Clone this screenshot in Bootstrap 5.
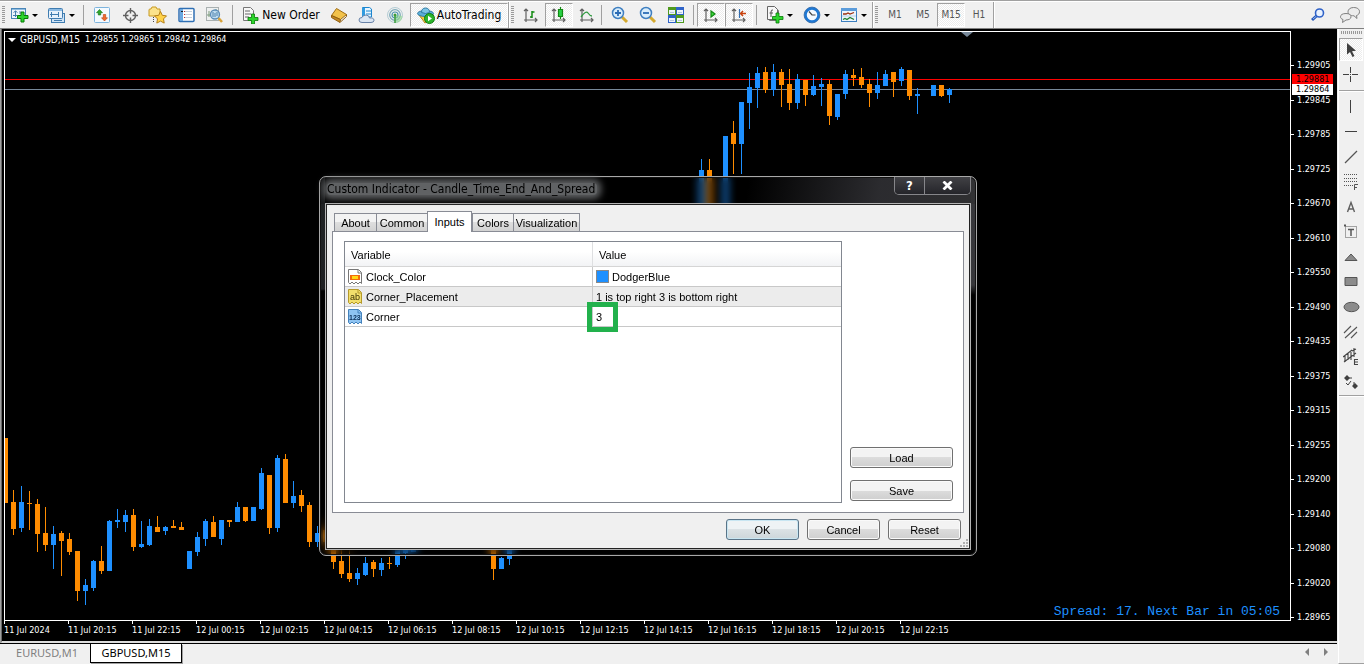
<!DOCTYPE html>
<html lang="en">
<head>
<meta charset="utf-8">
<meta name="viewport" content="width=device-width, initial-scale=1">
<title>GBPUSD,M15</title>
<link href="https://cdn.jsdelivr.net/npm/bootstrap@5.3.0/dist/css/bootstrap.min.css" rel="stylesheet">
<style>
:root{--face:#f0f0f0;--line:#a0a0a0;--up:#1e90ff;--down:#ff8c00;--ui:"DejaVu Sans Condensed","Noto Sans",sans-serif}
body{font-family:var(--ui);font-size:12px;line-height:16px;background:var(--face);color:#000}
button{font-family:inherit}
svg{display:block;flex:none}
.fit{min-width:0;min-height:0}
/* top toolbar */
.toolstrip{height:29px;background:var(--face);border-top:1px solid var(--line);box-shadow:inset 0 1px #fff;border-bottom:1px solid #808080;padding-top:1px}
.tool{border:1px solid transparent;background:none;padding:0;width:28px;height:24px;display:flex;align-items:center;justify-content:center;color:#555;flex:none}
.tool.wide{width:37px;gap:3px}
.tool.order{width:88px;gap:3px;color:#000}
.tool.auto{width:98px;gap:2px;color:#000;margin-left:1px}
.tool.frame{font-size:10px}
.tool.on{border-color:var(--line) #fff #fff var(--line);background:repeating-conic-gradient(#fff 0 25%,#ececec 0 50%) 0 0/2px 2px}
.caret{border:3px solid transparent;border-top-color:#000;border-bottom:0}
.rule{width:1px;height:20px;background:var(--line);flex:none;margin:0 3px}
.edge{width:1px;height:26px;background:var(--line);box-shadow:1px 0 #fff;flex:none}
.grip{width:3px;height:18px;flex:none;margin:0 3px 0 2px;background:repeating-linear-gradient(#999 0 1px,#f0f0f0 1px 2px)}
.grip:first-child{margin:0 1px 0 2px}
/* chart */
.chart{background:#000;color:#fff;border-left:1px solid #696969;box-shadow:-1px 0 var(--line);margin-left:1px;padding:2px 0 0 2px;font-size:9px;line-height:11px;border-bottom:2px solid #dcdcdc}
.plot{border:1px solid #fff;min-width:0;overflow:hidden}
.caption{left:3px;top:2px}
.caption b{font-weight:400;font-size:10px;margin-right:5px}
.caption i{border:4px solid transparent;border-top:4px solid #fff;border-bottom:0;margin-right:4px}
.shift{right:317px;top:0;border:6px solid transparent;border-top:5px solid #778899;border-bottom:0}
.countdown{right:10px;bottom:0;font:13px/16px "Liberation Mono",monospace;color:var(--up)}
.prices{width:46px;padding-top:29px;margin-bottom:-2px!important;flex:none}
.prices li{display:flex;align-items:center;gap:3px;height:11px}
.prices li::before{content:"";width:3px;height:1px;background:#fff}
.tag{right:4px;width:41px;height:11px;padding-left:4px;font-size:9px}
.tag.ask{top:43px;background:red;color:#000}
.tag.bid{top:53px;background:#fff;color:#000}
.times{height:20px;overflow:hidden;width:100%}
.times li{width:64px;flex:none;white-space:nowrap}
.times li::before{content:"";display:block;width:1px;height:3px;background:#fff}
.times span{display:block;margin-top:1px}
/* bottom chart tabs */
.charttabs{height:21px;border-top:1px solid #000;background:var(--face);font:11px/18px "Noto Sans",sans-serif}
.charttabs a{color:#808080;text-decoration:none;width:90px;text-align:center;padding-left:4px}
.charttabs a.active{width:92px;color:#000;background:#fff;border:1px solid #000;border-top:0;height:19px;box-shadow:1px 1px #a0a0a0;padding-left:0}
/* drawing tools on the right */
.side{width:26px;flex:none;background:var(--face);border-left:1px solid #fff;margin-left:1px;border-bottom:1px solid var(--line)}
.side .tool{width:24px;height:23px;margin-bottom:2px}
.hgrip{width:22px;height:3px;margin:2px 0 4px 2px;background:repeating-linear-gradient(90deg,#999 0 1px,#f0f0f0 1px 2px)}
.hrule{height:1px;background:var(--line);box-shadow:0 1px #fff;width:100%}
/* dialog */
.window{left:319px;top:176px;width:658px;border:1px solid #a8a8a8;border-radius:7px;padding:0 5px 5px;
 background:linear-gradient(100deg,rgba(0,0,0,.2) 65%,rgba(48,48,52,.9) 85%,rgba(50,50,52,.95)) 0 0/100% 27px no-repeat,linear-gradient(rgba(90,96,100,.35) 60px,rgba(60,64,68,.5) 112px,transparent 114px) 0 0/5px 100% no-repeat,linear-gradient(rgba(62,62,66,.9) 108px,transparent 118px) 100% 0/5px 100% no-repeat;
 backdrop-filter:blur(4px);box-shadow:inset 0 0 0 1px #111}
.titlebar{height:26px}
.titlebar h1{font-size:12px;line-height:12px;margin:6px 0 0 2px;padding-right:2px;font-weight:400;color:#000;background:#606264;box-shadow:0 0 7px 4px #606264;border-radius:4px}
.winbtn{height:18px;border:1px solid #86868a;border-top:0;border-radius:0 0 5px 5px;background:#2c2c30;overflow:hidden}
.winbtn button{background:linear-gradient(#414145,#25252a);border:0;color:#fff;padding:0;height:17px;width:29px;font-weight:700;font-size:13px;line-height:15px;display:flex;align-items:center;justify-content:center}
.winbtn button+button{width:46px;border-left:1px solid #86868a}
.client{background:var(--face);border:1px solid #b4b4b4;box-shadow:inset 0 0 0 1px #222;padding:7px 6px 9px;color:#000;font:11px/14px "Liberation Sans",sans-serif}
.sheets{padding-left:2px;height:20px}
.sheets button{border:1px solid #898c95;border-bottom:0;background:linear-gradient(#f3f3f3 50%,#dedede 50%,#d2d2d2);padding:0;height:18px;color:#000;border-right-width:0}
.sheets button.active{height:21px;background:#fff;border-right-width:1px;margin-bottom:-1px;padding-bottom:1px;position:relative}
.sheets li:last-child button{border-right-width:1px}
.w-about{width:42px}.w-common{width:51px}.w-inputs{width:45px}.w-colors{width:41px}.w-visual{width:67px}
.pane{background:#fff;border:1px solid #898c95;padding:9px 10px 9px 11px}
.grid-box{border:1px solid #828790;width:498px;height:262px;flex:none}
.inputs{width:100%;border-collapse:separate;border-spacing:0;table-layout:fixed}
.inputs th{height:25px;font-weight:400;padding:2px 6px 0;background:linear-gradient(#fff 40%,#f2f3f5);border-bottom:1px solid #d5d5d5}
.inputs td{height:20px;padding:0 2px;border-bottom:1px solid #c8c8c8}
.inputs tr>:first-child{border-right:1px solid #c8c8c8;width:248px}
.inputs th:first-child{border-right-color:#dedfe1}
.inputs label{gap:3px}
.inputs .alt td{background:#ececec}
.swatch{width:13px;height:13px;background:var(--up);border:1px solid #888;flex:none;margin:0 2px 0 1px}
.cellin{border:0;padding:0 0 0 1px;background:none;width:200px;height:18px;font:inherit;color:#000}
.mark-box{left:587px;top:302px;width:31px;height:30px;border:5px solid #22b14c;pointer-events:none}
.dlgbtn{width:73px;height:21px;border:1px solid #707070;border-radius:3px;padding:0;color:#000;background:linear-gradient(#f3f3f3 50%,#dcdcdc 50%,#cfcfcf);box-shadow:inset 0 0 0 1px #fafafa;line-height:16px}
.dlgbtn.main{border-color:#5a7488;background:linear-gradient(#eef3f5 50%,#dbe2e5 50%,#cdd6da);box-shadow:inset 0 0 0 1px #c8e6f2}
.loads{width:103px;gap:12px;padding-bottom:2px}
.loads .dlgbtn{width:100%}
.footer-btns{gap:8px;padding:6px 3px 0 0}
.sizer{right:8px;bottom:8px}
</style>
</head>
<body class="d-flex flex-column vh-100 overflow-hidden position-relative">
<header class="toolstrip d-flex align-items-center" role="toolbar" aria-label="Main toolbar">
  <span class="grip"></span>
  <button class="tool wide" aria-label="New chart"><svg width="18" height="16"><rect x=".5" y="1.5" width="14" height="10" fill="#eef5fc" stroke="#4a86b8"/><path d="M1 2.500h13" stroke="#8fbce0"/><path d="M4.500 4v6M2.500 5.500l2-1.500 2 1.500M2 8.500h4M9 4v3" stroke="#467fae" fill="none"/><path d="M10 5h3v3.500h4v3h-4V15h-3v-3.500H6.500v-3H10z" fill="#2cd42c" stroke="#067a06"/></svg><span class="caret"></span></button>
  <button class="tool wide" aria-label="Profiles"><svg width="18" height="17"><rect x="3.5" y="6.500" width="13" height="9" fill="#cfe3f5" stroke="#3f7cb0"/><rect x=".5" y="1.500" width="14" height="10" rx="1" fill="#e6f1fb" stroke="#3f7cb0"/><path d="M1 3h13" stroke="#8ab9e2" stroke-width="2"/><path d="M3.500 5v5M2 7.500h9M10.500 5v5M6 13.500h8" stroke="#3f7cb0"/></svg><span class="caret"></span></button>
  <span class="rule me-1"></span>
  <button class="tool" aria-label="Market Watch"><svg width="18" height="18"><rect x="1.500" y="1.500" width="15" height="15" rx="1" fill="#f4faff" stroke="#7db4de"/><path d="M6.500 3.500l3 3.200H7.700V9H5.300V6.700H3.500z" fill="#2fa82f" stroke="#107010" stroke-width=".6"/><path d="M11.500 15l-3-3.200h1.800V8.500h2.400v3.300h1.800z" fill="#f26a2c" stroke="#b53a0c" stroke-width=".6"/></svg></button>
  <button class="tool" aria-label="Data Window"><svg width="17" height="17" fill="none" stroke="#606060" stroke-width="1.400"><circle cx="8.500" cy="8.500" r="5"/><path d="M8.500 1v5.500M8.500 10.500V16M1 8.500h5.500M10.500 8.500H16"/></svg></button>
  <button class="tool" aria-label="Navigator"><svg width="20" height="18"><path d="M1 4q0-1 1-1h1l1-2h4l1 2h3v7H1z" fill="#fbe38c" stroke="#c79a22"/><path d="M5.500 11v6" stroke="#444" stroke-dasharray="1 1"/><path d="M12.500 5.500l1.800 3.800 4.200.6-3 3 .7 4.200-3.700-2-3.700 2 .7-4.200-3-3 4.200-.6z" fill="#ffd24a" stroke="#b5801a"/></svg></button>
  <button class="tool" aria-label="Terminal"><svg width="17" height="16"><rect x="1" y="1.500" width="15" height="13" rx="1" fill="#fff" stroke="#2f6fb4" stroke-width="1.500"/><path d="M2 2h3v12H2z" fill="#6aa7e0"/><path d="M7 4.500h7M7 7.500h7M7 10.500h7" stroke="#c4d0dc"/><path d="M3 4.500h2" stroke="#222"/><path d="M6 4.500h1M6 7.500h1M6 10.500h1" stroke="#c03030"/></svg></button>
  <button class="tool" aria-label="Strategy Tester"><svg width="19" height="18"><rect x="1.500" y="1.500" width="12" height="13" fill="#eef0f0" stroke="#a9b0b0"/><path d="M4 11V5M2 9h4M11 3v4" stroke="#7a9a7a"/><circle cx="10" cy="8.500" r="4.500" fill="#b9daf3" fill-opacity=".85" stroke="#5c8db8" stroke-width="1.300"/><path d="M8 6v5M10 7v4M12 6v4" stroke="#4b7ea8"/><path d="M13.500 12l3.500 4" stroke="#d8a33a" stroke-width="2.500"/></svg></button>
  <span class="rule ms-1 me-1"></span>
  <button class="tool order"><svg width="17" height="18"><path d="M1.500 1.500h7l3 3v10h-10z" fill="#f7f7f7" stroke="#777"/><path d="M3 5h5M3 8h6M3 11h4" stroke="#666"/><path d="M9.500 8h3v3.500H16v3h-3.500V18h-3v-3.500H6v-3h3.500z" fill="#2cd42c" stroke="#067a06" stroke-width=".8"/></svg>New Order</button>
  <button class="tool" aria-label="MetaEditor"><svg width="18" height="16"><path d="M1.500 8.500L6.500 1.500l10 6L10.500 12.500z" fill="#f2c24a" stroke="#a06c12"/><path d="M1.500 8.500v2l8.500 5 .5-3z" fill="#c58a22" stroke="#905e10"/><path d="M16.500 7.500v2L10.500 15" stroke="#905e10" fill="none"/></svg></button>
  <button class="tool" aria-label="Virtual hosting"><svg width="18" height="18"><path d="M4.500 1.500h7l2 1.500v8h-9z" fill="#e6f5ff" stroke="#1c86cf"/><path d="M4 2h3v8H4z" fill="#2f9ae0"/><path d="M8 5h5M8 8h5" stroke="#1c86cf"/><path d="M4 16.500q-3 0-3-2.500t3-2.500q1-2.500 4-2.500t3.500 3q4.500-.5 4.500 2.300 0 2.200-3 2.200z" fill="#dbe6f3" stroke="#6882a8"/></svg></button>
  <button class="tool" aria-label="Signals"><svg width="18" height="18" fill="none"><circle cx="9" cy="9" r="7.500" stroke="#b4ccd4"/><circle cx="9" cy="9" r="5.300" stroke="#7aa9b8" stroke-width="1.200"/><circle cx="9" cy="9" r="3" stroke="#4a92b0" stroke-width="1.200"/><path d="M9 9v8q7-.5 7.500-7" fill="#8fd88f" fill-opacity=".6"/><circle cx="9" cy="9" r="1.500" fill="#3b9c3b"/><path d="M9 9v8" stroke="#3b9c3b" stroke-width="1.500"/></svg></button>
  <button class="tool auto on" aria-pressed="true"><svg width="18" height="17"><path d="M2 8l6 8 7-5 1-4z" fill="#f5c842" stroke="#b08518"/><ellipse cx="8.500" cy="6.500" rx="8" ry="3" fill="#5aaed8" stroke="#2f7ba4"/><path d="M4.500 5.500q0-4.500 4-4.500t4 4.500q-4 2-8 0z" fill="#7cc4e6" stroke="#2f7ba4"/><circle cx="12.500" cy="11.500" r="5" fill="#2cb52c" stroke="#0f7a0f"/><path d="M11 8.800v5.400l4-2.700z" fill="#fff"/></svg>AutoTrading</button>
  <span class="edge"></span><span class="grip"></span>
  <button class="tool" aria-label="Bar chart"><svg width="16" height="16" fill="none" stroke="#606060" stroke-width="1.200"><path d="M3 15V2M1 4l2-2 2 2M1 13h13M12 11l2 2-2 2"/><path d="M9 4v7M9 5h2.500M7 10h2" stroke="#138a13" stroke-width="1.500"/></svg></button>
  <button class="tool on" aria-label="Candlesticks"><svg width="16" height="16" fill="none" stroke="#606060" stroke-width="1.200"><path d="M3 15V2M1 4l2-2 2 2M1 13h13M12 11l2 2-2 2"/><path d="M9.500 0v12" stroke="#138a13"/><path d="M7.500 2.500h4v7h-4z" stroke="#138a13" fill="#28d045"/></svg></button>
  <button class="tool" aria-label="Line chart"><svg width="16" height="16" fill="none" stroke="#606060" stroke-width="1.200"><path d="M3 15V2M1 4l2-2 2 2M1 13h13M12 11l2 2-2 2"/><path d="M2 10q5-7 7-4t4 3" stroke="#2f9a3f" stroke-width="1.300"/></svg></button>
  <span class="rule ms-0 me-1"></span>
  <button class="tool" aria-label="Zoom in"><svg width="18" height="18"><path d="M11 11l5 5" stroke="#d4a92e" stroke-width="3"/><circle cx="7" cy="7" r="5.500" fill="#d9edfb" stroke="#3f7fc0" stroke-width="1.500"/><path d="M4 7h6M7 4v6" stroke="#2b6cb5" stroke-width="1.800"/></svg></button>
  <button class="tool" aria-label="Zoom out"><svg width="18" height="18"><path d="M11 11l5 5" stroke="#d4a92e" stroke-width="3"/><circle cx="7" cy="7" r="5.500" fill="#d9edfb" stroke="#3f7fc0" stroke-width="1.500"/><path d="M4 7h6" stroke="#2b6cb5" stroke-width="1.800"/></svg></button>
  <button class="tool" aria-label="Tile windows"><svg width="16" height="16"><path d="M0 0h8v8H0zM8 8h8v8H8z" fill="#4f9a1e"/><path d="M8 0h8v8H8zM0 8h8v8H0z" fill="#2f63c8"/><path d="M1 3h6v4H1zM9 3h6v4H9zM1 11h6v4H1zM9 11h6v4H9z" fill="#eef4fb"/><path d="M2 5.500h4M10 5.500h4M2 13.500h4M10 13.500h4" stroke="#b4c6de"/></svg></button>
  <span class="rule"></span>
  <button class="tool on" aria-label="Auto scroll"><svg width="16" height="16" fill="none" stroke="#606060" stroke-width="1.200"><path d="M3 15V2M1 4l2-2 2 2M1 13h13M12 11l2 2-2 2"/><path d="M8 4v6l4-3z" fill="#3ddc3d" stroke="#138a13"/></svg></button>
  <button class="tool on" aria-label="Chart shift"><svg width="16" height="16" fill="none" stroke="#606060" stroke-width="1.200"><path d="M3 15V2M1 4l2-2 2 2M1 13h13M12 11l2 2-2 2"/><path d="M8.500 2v9" stroke="#2f6fb4"/><path d="M15 6.500h-5M12 4l-2.500 2.500L12 9" stroke="#c8400c" stroke-width="1.400"/></svg></button>
  <span class="rule me-1"></span>
  <button class="tool wide" aria-label="Indicators"><svg width="18" height="18"><path d="M3.500 2.500h7l2 2v10h-9z" fill="#ddd" stroke="#777"/><path d="M1.500.5h7l3 3v10h-10z" fill="#f7f7f7" stroke="#666"/><path d="M7 4q-2-.5-2 2v5M3.500 7H7" fill="none" stroke="#555"/><path d="M10 7h3v3.500h4v3h-4V17h-3v-3.500H6.500v-3H10z" fill="#2cd42c" stroke="#067a06" stroke-width=".8"/></svg><span class="caret"></span></button>
  <button class="tool wide" aria-label="Periods"><svg width="18" height="18"><circle cx="9" cy="9" r="6.500" fill="#f4f9ff" stroke="#1e78d4" stroke-width="2.500"/><circle cx="9" cy="9" r="7.900" fill="none" stroke="#0f4f98" stroke-width=".7"/><path d="M6 5.500L9 9h3.500" stroke="#444" fill="none" stroke-width="1.200"/></svg><span class="caret"></span></button>
  <button class="tool wide" aria-label="Templates"><svg width="18" height="16"><rect x="1.500" y="1.500" width="15" height="13" fill="#eef5fb" stroke="#3c7fc0"/><path d="M1 2.500h16" stroke="#5b9cdb" stroke-width="3"/><path d="M2 9h14" stroke="#b4cfe6"/><path d="M3 7h3l2-1 2 1 4-1.500" stroke="#9c3010" fill="none" stroke-width="1.300"/><path d="M3 12.500l2-1 2 1 3-2 4 2" stroke="#1e7f2e" fill="none" stroke-width="1.300"/></svg><span class="caret"></span></button>
  <span class="edge"></span><span class="grip"></span>
  <button class="tool frame">M1</button><button class="tool frame">M5</button><button class="tool frame on" aria-pressed="true">M15</button><button class="tool frame">H1</button>
  <span class="edge"></span>
  <div class="d-flex ms-auto">
    <button class="tool" aria-label="Search"><svg width="16" height="16"><path d="M7 8.500L2 13" stroke="#2456b8" stroke-width="3"/><path d="M6.500 9L3 12" stroke="#8fb4f0"/><circle cx="9.500" cy="6" r="4" fill="#e9f2ff" stroke="#2f62c8" stroke-width="1.600"/></svg></button>
    <button class="tool ms-1" aria-label="Chat"><svg width="22" height="18" fill="#ececec" stroke="#808080"><path d="M14.500 1.500c4 0 6 1.800 6 4.200 0 2-1.200 3.300-3 3.800l.5 3-3-2.700c-4 0-6-1.800-6-4s2-4.300 5.500-4.300z"/><path d="M7 7.500c3.500 0 5 1.300 5 3.300s-2 3.200-5 3.200l-3.500 2.500.5-3c-1.700-.5-2.500-1.500-2.500-2.700 0-2 2-3.300 5.500-3.300z"/></svg></button>
  </div>
</header>

<div class="d-flex flex-fill fit">
  <main class="d-flex flex-column flex-fill fit">
    <section class="chart d-flex flex-column flex-fill" aria-label="GBPUSD M15 chart">
      <div class="d-flex flex-fill position-relative">
        <div class="plot d-flex flex-fill position-relative">
          <svg class="flex-fill" width="100" id="candles"></svg>
          <div class="caption position-absolute d-flex align-items-center"><i></i><b>GBPUSD,M15</b><span>1.29855 1.29865 1.29842 1.29864</span></div>
          <span class="shift position-absolute"></span>
          <div class="countdown position-absolute">Spread: 17. Next Bar in 05:05</div>
        </div>
        <ol class="prices list-unstyled d-flex flex-column justify-content-between">
          <li>1.29905</li><li>1.29845</li><li>1.29785</li><li>1.29725</li><li>1.29670</li><li>1.29610</li><li>1.29550</li><li>1.29490</li><li>1.29435</li><li>1.29375</li><li>1.29315</li><li>1.29255</li><li>1.29200</li><li>1.29140</li><li>1.29080</li><li>1.29020</li><li>1.28965</li>
        </ol>
        <span class="tag ask position-absolute">1.29881</span><span class="tag bid position-absolute">1.29864</span>
      </div>
      <ol class="times list-unstyled mb-0 d-flex">
        <li><span>11 Jul 2024</span></li><li><span>11 Jul 20:15</span></li><li><span>11 Jul 22:15</span></li><li><span>12 Jul 00:15</span></li><li><span>12 Jul 02:15</span></li><li><span>12 Jul 04:15</span></li><li><span>12 Jul 06:15</span></li><li><span>12 Jul 08:15</span></li><li><span>12 Jul 10:15</span></li><li><span>12 Jul 12:15</span></li><li><span>12 Jul 14:15</span></li><li><span>12 Jul 16:15</span></li><li><span>12 Jul 18:15</span></li><li><span>12 Jul 20:15</span></li><li><span>12 Jul 22:15</span></li>
      </ol>
    </section>
    <nav class="charttabs d-flex" aria-label="Open charts">
      <a href="#">EURUSD,M1</a><a href="#" class="active" aria-current="page">GBPUSD,M15</a>
      <svg class="ms-auto me-2 mt-1" width="24" height="9" fill="#808080"><path d="M4 0v8L0 4zM19 0v8l4-4z"/></svg>
    </nav>
  </main>
  <aside class="side" role="toolbar" aria-label="Drawing tools" aria-orientation="vertical">
    <div class="hgrip"></div>
    <button class="tool on" aria-label="Cursor"><svg width="12" height="16"><path d="M2 1v11.500l3-2.500 2.500 5 2-1L7 9.200l4-.5z" fill="#404040"/></svg></button>
    <button class="tool" aria-label="Crosshair"><svg width="16" height="16" stroke="#404040"><path d="M7.500 0v6M7.500 9v6M0 7.500h6M9 7.500h6M7 7.500h1"/></svg></button>
    <div class="hrule mt-1 mb-1"></div>
    <button class="tool" aria-label="Vertical line"><svg width="16" height="16" stroke="#404040"><path d="M7.500 1v13"/></svg></button>
    <button class="tool" aria-label="Horizontal line"><svg width="16" height="16" stroke="#404040"><path d="M2 7.500h12"/></svg></button>
    <button class="tool" aria-label="Trendline"><svg width="16" height="16" stroke="#555" stroke-width="1.300"><path d="M2 14L14 2"/></svg></button>
    <button class="tool" aria-label="Fibonacci retracement"><svg width="16" height="18" stroke="#555" fill="none"><path d="M1 1.500h13M1 5.500h13M1 8.500h13M1 12.500h9" stroke-dasharray="1 1"/><path d="M11.500 17v-5.500H15M11.500 14.500H14"/></svg></button>
    <button class="tool" aria-label="Text"><svg width="16" height="16" stroke="#606060" stroke-width="1.400" fill="none"><path d="M4.500 13L8 3.500 11.500 13M5.500 10h5"/></svg></button>
    <button class="tool" aria-label="Text label"><svg width="16" height="16" stroke="#555" fill="none"><path d="M2.500 2.500h11v11h-11z" stroke-dasharray="1 1"/><path d="M5 5.500h6M8 5v7" stroke-width="1.500"/><path d="M1 1.500h2" stroke-width="2"/></svg></button>
    <button class="tool" aria-label="Triangle"><svg width="16" height="16"><path d="M2 11.500L8 5l6 6.500z" fill="#8c8c8c" stroke="#555"/></svg></button>
    <button class="tool" aria-label="Rectangle"><svg width="16" height="16"><path d="M2 3.500h12v8H2z" fill="#8c8c8c" stroke="#555"/></svg></button>
    <button class="tool" aria-label="Ellipse"><svg width="17" height="16"><ellipse cx="8.500" cy="8" rx="7.500" ry="4.700" fill="#8c8c8c" stroke="#555"/></svg></button>
    <button class="tool" aria-label="Equidistant channel"><svg width="16" height="16" stroke="#555" stroke-width="1.100"><path d="M1 9l7-7M2 14L14 3M8 14l6-6"/></svg></button>
    <button class="tool" aria-label="Linear regression channel"><svg width="17" height="18" stroke="#444" stroke-width="1.100" fill="none"><path d="M0 9l9-7M1 14L13 5M2 7v7M5 5v7M8 4v8M11 0v9M9 3l4-2M15 11.500h-3.500v5H15M11.500 14H15"/></svg></button>
    <button class="tool" aria-label="Arrows"><svg width="16" height="16" fill="#404040"><path d="M4 1l3 3-3 3-3-3zM12 9l3 3-3 3-3-3z"/><path d="M3 9l2 2 3-4M6 4h3M11 8v3" stroke="#404040" fill="none"/></svg></button>
    <div class="hrule"></div>
  </aside>
</div>

<section class="window position-absolute" role="dialog" aria-labelledby="dlgTitle">
  <div class="titlebar d-flex justify-content-between align-items-start">
    <h1 id="dlgTitle">Custom Indicator - Candle_Time_End_And_Spread</h1>
    <div class="winbtn d-flex"><button aria-label="Help">?</button><button aria-label="Close"><svg width="12" height="9"><path d="M1.500.5l8 8M9.500.5l-8 8" stroke="#fff" stroke-width="2.800"/></svg></button></div>
  </div>
  <div class="client">
    <ul class="sheets nav align-items-end" role="tablist">
      <li><button role="tab" class="w-about">About</button></li>
      <li><button role="tab" class="w-common">Common</button></li>
      <li><button role="tab" class="active w-inputs" aria-selected="true">Inputs</button></li>
      <li><button role="tab" class="w-colors">Colors</button></li>
      <li><button role="tab" class="w-visual">Visualization</button></li>
    </ul>
    <div class="pane d-flex justify-content-between" role="tabpanel">
      <div class="grid-box">
        <table class="inputs">
          <thead><tr><th scope="col">Variable</th><th scope="col">Value</th></tr></thead>
          <tbody>
            <tr><td><label class="d-flex align-items-center" for="v1"><svg width="16" height="16"><path d="M1.500.5h10l3 3v11l-1.500-1.500-2 2-2-2-2 2-2-2-2 2-1.500-1.500z" fill="#fff" stroke="#777"/><path d="M11 1v3h3" fill="none" stroke="#777"/><path d="M3 6h10v5H3z" fill="#f26a0c"/><path d="M5 7h6v3H5z" fill="#ffd816"/></svg>Clock_Color</label></td><td><div class="d-flex align-items-center"><span class="swatch"></span><input class="cellin" id="v1" value="DodgerBlue"></div></td></tr>
            <tr class="alt"><td><label class="d-flex align-items-center" for="v2"><svg width="16" height="16"><path d="M1.500.5h10l3 3v11l-1.500-1.500-2 2-2-2-2 2-2-2-2 2-1.500-1.500z" fill="#f2df6c" stroke="#b59a2a"/><path d="M11 1v3h3" fill="none" stroke="#b59a2a"/><text x="3" y="11" font-family="Liberation Sans" font-size="9" fill="#3c3204">ab</text></svg>Corner_Placement</label></td><td><input class="cellin" id="v2" value="1 is top right 3 is bottom right"></td></tr>
            <tr><td><label class="d-flex align-items-center" for="v3"><svg width="16" height="16"><path d="M1.500.5h10l3 3v11l-1.500-1.500-2 2-2-2-2 2-2-2-2 2-1.500-1.500z" fill="#8fc4f2" stroke="#4482bc"/><path d="M11 1v3h3" fill="none" stroke="#4482bc"/><text x="2" y="11" font-family="Liberation Sans" font-size="7" font-weight="700" fill="#0b2f57">123</text></svg>Corner</label></td><td><input class="cellin" id="v3" value="3"></td></tr>
          </tbody>
        </table>
      </div>
      <div class="loads d-flex flex-column justify-content-end"><button class="dlgbtn">Load</button><button class="dlgbtn">Save</button></div>
    </div>
    <div class="footer-btns d-flex justify-content-end"><button class="dlgbtn main">OK</button><button class="dlgbtn">Cancel</button><button class="dlgbtn">Reset</button></div>
  </div>
  <svg class="sizer position-absolute" width="8" height="8" fill="#b0b0b0"><path d="M6 0h2v2H6zM3 3h2v2H3zM6 3h2v2H6zM0 6h2v2H0zM3 6h2v2H3zM6 6h2v2H6z"/></svg>
</section>
<div class="mark-box position-absolute"></div>

<script>
// slot, high, body top, body bottom, low, direction (1 rising, 0 falling)
const bars=[[0,438,438,503,503,0],[1,490,502,529,535,0],[2,486,502,528,532,1],[3,491,503,504,530,0],[4,499,504,534,552,0],[5,507,533,545,551,0],[6,526,534,545,569,1],[7,531,533,541,576,0],[8,533,539,552,555,0],[9,551,551,591,601,0],[10,579,585,591,605,1],[11,560,561,588,591,1],[12,546,561,571,574,0],[13,520,521,571,571,1],[14,509,520,522,528,1],[15,510,515,522,532,1],[16,509,515,547,551,0],[17,521,544,547,548,1],[18,519,526,545,546,1],[19,516,527,532,532,0],[20,526,527,531,535,1],[21,520,526,528,528,0],[22,522,527,530,530,0],[23,551,551,569,569,1],[24,532,537,552,556,1],[25,519,521,539,546,1],[26,516,522,537,537,0],[27,520,520,539,545,1],[28,520,520,522,527,0],[29,502,507,522,522,1],[30,507,507,521,522,0],[31,507,507,521,521,1],[32,468,473,509,510,1],[33,475,475,528,534,0],[34,455,458,528,532,1],[35,454,459,503,503,0],[36,481,496,503,508,1],[37,490,495,506,512,0],[38,502,505,542,547,0],[39,526,533,542,547,1],[40,520,530,542,550,0],[41,535,545,562,569,0],[42,550,561,574,578,0],[43,550,573,579,582,0],[44,568,573,579,585,1],[45,557,563,575,576,1],[46,560,562,569,577,0],[47,558,563,570,576,1],[48,557,563,564,569,0],[49,548,550,565,567,1],[50,540,542,553,559,1],[51,540,540,552,552,1],[61,540,543,569,580,0],[62,557,558,569,569,1],[63,540,542,559,565,1],[87,159,170,250,250,1],[88,159,170,250,250,0],[90,136,136,250,250,1],[91,121,133,144,174,0],[92,102,102,144,174,1],[93,73,87,103,129,1],[94,67,73,88,108,1],[95,67,72,90,93,0],[96,64,72,90,96,1],[97,69,72,85,107,0],[98,69,84,103,110,0],[99,74,79,103,109,1],[100,80,80,95,106,0],[101,75,86,95,96,1],[102,78,84,87,106,1],[103,80,84,116,125,0],[104,94,94,117,120,1],[105,70,74,94,99,1],[106,69,75,78,86,0],[107,68,77,85,88,0],[108,79,84,93,107,0],[109,72,85,93,99,1],[110,70,74,86,86,1],[111,72,72,82,97,0],[112,67,69,81,86,1],[113,70,70,96,100,0],[114,88,94,96,114,1],[116,85,85,96,96,1],[117,85,85,96,97,0],[118,88,89,95,103,1]];
const x0=5,y0=32,c=['#ff8c00','#1e90ff'];
const r=(x,y,w,h,f)=>`<rect x="${x}" y="${y}" width="${w}" height="${h}" fill="${f}"/>`;
let out=r(0,79-y0,'100%',1,'#ff0000')+r(0,89-y0,'100%',1,'#778899');
for(const [i,h,t,b,l,d] of bars){const x=i*8+5-x0;out+=r(x,h-y0,1,Math.max(1,l-h),c[d])+r(x-2,t-y0,5,b-t,c[d]);}
document.getElementById('candles').innerHTML=out;
</script>
<script src="https://cdn.jsdelivr.net/npm/bootstrap@5.3.0/dist/js/bootstrap.bundle.min.js"></script>
</body>
</html>
